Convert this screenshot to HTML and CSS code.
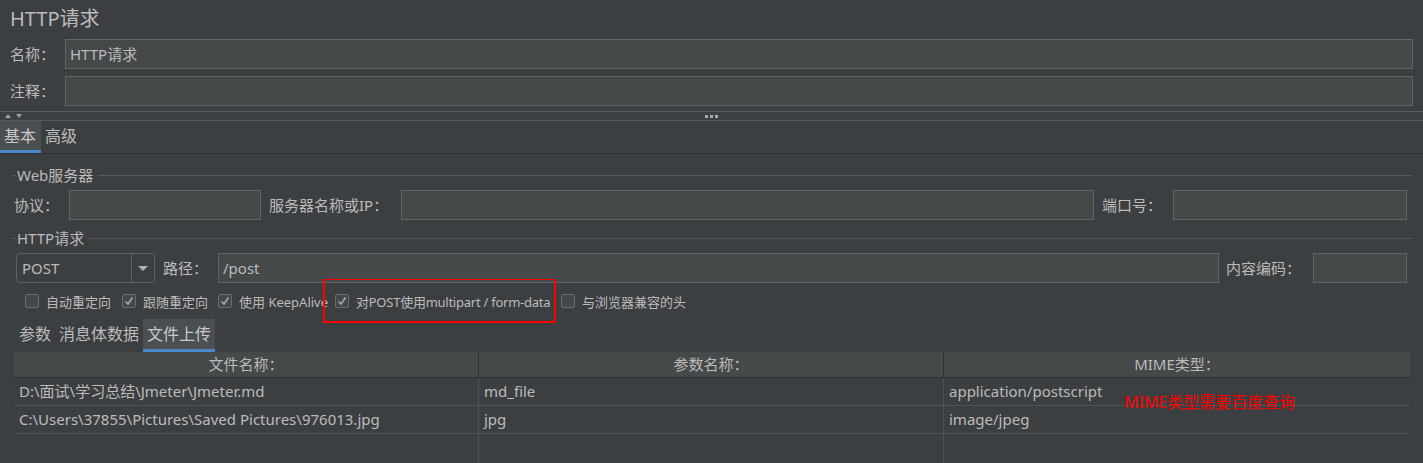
FILE: index.html
```html
<!DOCTYPE html>
<html lang="zh">
<head>
<meta charset="utf-8">
<title>HTTP请求</title>
<link rel="stylesheet" href="styles.css">
</head>
<body>
<div class="page">
  <div class="title">HTTP请求</div>
  <div class="form-row">
    <span class="row-label">名称：</span>
    <div class="field grow">HTTP请求</div>
  </div>
  <div class="form-row second">
    <span class="row-label">注释：</span>
    <div class="field grow"></div>
  </div>
  <div class="splitter">
    <div class="arrows">
      <svg width="20" height="6" viewBox="0 0 20 6"><polygon points="1,5 4,1 7,5" fill="#a0a0a0"/><polygon points="12,1 18,1 15,5" fill="#a0a0a0"/></svg>
    </div>
    <div class="dots"><i></i><i></i><i></i></div>
  </div>
  <div class="tabs main-tabs">
    <div class="tab active">基本</div>
    <div class="tab">高级</div>
  </div>

  <div class="content">
    <div class="group">
      <div class="legend"><span class="lead"></span><span class="legend-text">Web服务器</span><span class="rule"></span></div>
      <div class="server-row">
        <span class="lbl w-proto">协议：</span>
        <div class="field w192"></div>
        <span class="lbl w-host">服务器名称或IP：</span>
        <div class="field grow"></div>
        <span class="lbl w-port">端口号：</span>
        <div class="field w235"></div>
      </div>
    </div>

    <div class="group second-group">
      <div class="legend"><span class="lead"></span><span class="legend-text">HTTP请求</span><span class="rule"></span></div>
      <div class="request-row">
        <div class="combo">
          <span class="combo-value">POST</span>
          <span class="combo-btn"><svg width="10" height="5" viewBox="0 0 10 5"><polygon points="0,0 10,0 5,5" fill="#b0b0b0"/></svg></span>
        </div>
        <span class="lbl w-path">路径：</span>
        <div class="field grow">/post</div>
        <span class="lbl w-enc">内容编码：</span>
        <div class="field w94"></div>
      </div>
      <div class="checks">
        <label class="check c1"><span class="box"></span>自动重定向</label>
        <label class="check c2"><span class="box on"><svg width="10" height="10" viewBox="0 0 10 10"><polyline points="1.5,5.5 4,8 8.5,1.5" fill="none" stroke="#a8a8a8" stroke-width="1.6"/></svg></span>跟随重定向</label>
        <label class="check c3"><span class="box on"><svg width="10" height="10" viewBox="0 0 10 10"><polyline points="1.5,5.5 4,8 8.5,1.5" fill="none" stroke="#a8a8a8" stroke-width="1.6"/></svg></span>使用 KeepAlive</label>
        <label class="check c4"><span class="box on"><svg width="10" height="10" viewBox="0 0 10 10"><polyline points="1.5,5.5 4,8 8.5,1.5" fill="none" stroke="#a8a8a8" stroke-width="1.6"/></svg></span><span class="tight">对POST使用multipart / form-data</span></label>
        <label class="check"><span class="box"></span>与浏览器兼容的头</label>
      </div>
    </div>

    <div class="tabs sub-tabs">
      <div class="tab">参数</div>
      <div class="tab">消息体数据</div>
      <div class="tab active">文件上传</div>
    </div>

    <div class="table">
      <div class="thead">
        <div class="th">文件名称：</div>
        <div class="th">参数名称：</div>
        <div class="th">MIME类型：</div>
      </div>
      <div class="tr">
        <div class="td">D:\面试\学习总结\Jmeter\Jmeter.md</div>
        <div class="td">md_file</div>
        <div class="td">application/postscript</div>
      </div>
      <div class="tr">
        <div class="td">C:\Users\37855\Pictures\Saved Pictures\976013.jpg</div>
        <div class="td">jpg</div>
        <div class="td">image/jpeg</div>
      </div>
      <div class="tr filler">
        <div class="td"></div>
        <div class="td"></div>
        <div class="td"></div>
      </div>
    </div>
  </div>

  <div class="highlight"></div>
  <div class="note">MIME类型需要百度查询</div>
</div>
</body>
</html>
```

FILE: styles.css
```css
* { box-sizing: border-box; }
html, body {
  margin: 0;
  padding: 0;
  background: #3c3f41;
  height: 100%;
  overflow: hidden;
}
.page {
  position: relative;
  font-family: "Noto Sans", "Noto Sans CJK SC", sans-serif;
  color: #bbbbbb;
  font-size: 15px;
  height: 463px;
}
.title {
  height: 39px;
  padding-left: 10px;
  font-size: 20px;
  line-height: 38px;
}
.form-row {
  display: flex;
  align-items: center;
  height: 30px;
  padding-right: 10px;
}
.form-row.second { margin-top: 7px; }
.row-label {
  width: 65px;
  padding-left: 10px;
  line-height: 30px;
}
.field {
  height: 30px;
  background: #45494a;
  border: 1px solid #646464;
  line-height: 28px;
  padding-left: 4px;
  white-space: nowrap;
  overflow: hidden;
}
.grow { flex: 1; }
.w192 { width: 192px; }
.w235 { width: 234px; }
.w94 { width: 94px; }

.splitter {
  position: relative;
  margin-top: 5px;
  height: 10px;
  border-top: 1px solid #5a5d5f;
  border-bottom: 1px solid #555759;
}
.arrows {
  position: absolute;
  left: 4px;
  top: 1px;
  line-height: 0;
}
.dots {
  position: absolute;
  left: 705px;
  top: 3px;
  display: flex;
  gap: 2px;
}
.dots i {
  display: block;
  width: 3px;
  height: 3px;
  background: #aaaaaa;
}

.tabs {
  display: flex;
}
.main-tabs {
  height: 33px;
  border-bottom: 1px solid #2f3133;
}
.tab {
  font-size: 16px;
  line-height: 30px;
  padding: 0 4px;
  border-bottom: 3px solid transparent;
}
.tab.active {
  background: #4b4f52;
  border-bottom-color: #4a88c7;
  color: #c8c8c8;
}
.main-tabs .tab { height: 32px; }
.main-tabs .tab:first-child { width: 41px; }

.content {
  padding: 0 11px 0 12px;
}
.legend {
  display: flex;
  align-items: center;
  height: 22px;
  margin-top: 10px;
}
.legend .lead {
  width: 4px;
  height: 1px;
  background: #555759;
}
.legend .rule {
  flex: 1;
  height: 1px;
  background: #555759;
  margin-left: 5px;
}
.legend-text {
  padding-left: 1px;
  line-height: 22px;
}
.server-row {
  display: flex;
  align-items: center;
  margin-top: 4px;
  padding-left: 2px;
  margin-right: 5px;
}
.lbl { line-height: 30px; white-space: nowrap; }
.w-proto { width: 55px; }
.w-host { width: 132px; margin-left: 8px; }
.w-port { width: 71px; margin-left: 8px; }
.w-path { width: 55px; margin-left: 8px; }
.w-enc { width: 87px; margin-left: 7px; }

.second-group .legend { margin-top: 7px; }
.request-row {
  display: flex;
  align-items: center;
  margin-top: 4px;
  padding-left: 4px;
  margin-right: 5px;
}
.combo {
  width: 139px;
  height: 30px;
  display: flex;
  border: 1px solid #5e6163;
  border-radius: 3px;
  background: #3c3f41;
}
.combo-value {
  flex: 1;
  padding-left: 5px;
  line-height: 28px;
}
.combo-btn {
  width: 23px;
  border-left: 1px solid #5e6163;
  display: flex;
  align-items: center;
  justify-content: center;
}

.checks {
  display: flex;
  align-items: center;
  height: 26px;
  margin-top: 5px;
  padding-left: 13px;
  font-size: 13px;
}
.check {
  display: flex;
  align-items: center;
  white-space: nowrap;
}
.c1 { width: 97px; }
.c2 { width: 96px; }
.c3 { width: 117px; }
.c4 { width: 226px; }
.tight { letter-spacing: -0.25px; }
.box {
  flex: none;
  width: 14px;
  height: 14px;
  border: 1px solid #6b6b6b;
  border-radius: 2px;
  background: #43494a;
  margin-right: 7px;
  display: flex;
  align-items: center;
  justify-content: center;
}

.sub-tabs {
  margin-top: 5px;
  padding-left: 3px;
  height: 33px;
}

.table {
  width: 1396px;
  margin-left: 2px;
}
.thead {
  display: grid;
  grid-template-columns: 465px 465px 466px;
  height: 26px;
  background: #45494a;
  border-bottom: 1px solid #2f3133;
}
.th {
  text-align: center;
  line-height: 25px;
  border-right: 1px solid #2f3133;
}
.th:last-child { border-right: none; }
.tr {
  display: grid;
  grid-template-columns: 465px 465px 466px;
  height: 28px;
  border-bottom: 1px solid #4f5254;
}
.td {
  padding-left: 5px;
  line-height: 27px;
  border-right: 1px solid #4f5254;
  white-space: nowrap;
}
.td:last-child { border-right: none; }
.tr.filler { height: 40px; border-bottom: none; }

.highlight {
  position: absolute;
  left: 323px;
  top: 279px;
  width: 233px;
  height: 44px;
  border: 2px solid #ff0000;
  border-top-width: 1px;
}
.note {
  position: absolute;
  left: 1124px;
  top: 391px;
  color: #ff0000;
  font-size: 16px;
  line-height: 22px;
  white-space: nowrap;
}
```
